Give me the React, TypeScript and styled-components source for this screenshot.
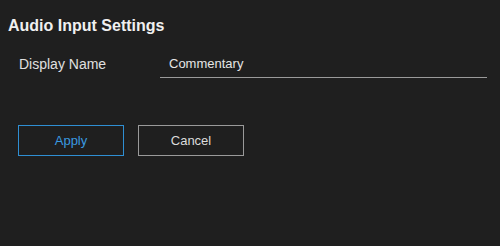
import React from 'react';
import styled, { createGlobalStyle } from 'styled-components';

const Global = createGlobalStyle`
  html, body {
    margin: 0;
    background: #1f1f1f;
  }
  body {
    font-family: "Liberation Sans", Arial, sans-serif;
    color: #e6e6e6;
  }
`;

const Panel = styled.div`
  width: 500px;
  height: 246px;
  background: #1f1f1f;
  box-sizing: border-box;
  padding: 17px 13px 0 8px;
`;

const Title = styled.h1`
  margin: 0;
  font-size: 16px;
  font-weight: bold;
  color: #f0f0f0;
  line-height: 18px;
`;

const Row = styled.div`
  display: flex;
  align-items: flex-end;
  margin-top: 17px;
  padding-left: 11px;
`;

const Label = styled.label`
  width: 141px;
  font-size: 14px;
  line-height: 18px;
  color: #e0e0e0;
  padding-bottom: 5px;
`;

const Input = styled.input`
  flex: 1;
  background: transparent;
  border: none;
  border-bottom: 1px solid #9a9a9a;
  color: #e6e6e6;
  font-family: inherit;
  font-size: 13px;
  height: 22px;
  padding: 0 0 3px 9px;
  outline: none;
`;

const Actions = styled.div`
  display: flex;
  gap: 14px;
  margin-top: 47px;
  padding-left: 10px;
`;

const Button = styled.button<{ $primary?: boolean }>`
  width: 106px;
  height: 31px;
  background: transparent;
  border: 1px solid ${(p) => (p.$primary ? '#2f8fd3' : '#9a9a9a')};
  color: ${(p) => (p.$primary ? '#3a9ae0' : '#dcdcdc')};
  font-family: inherit;
  font-size: 13px;
  cursor: pointer;
`;

export default function App() {
  return (
    <Panel>
      <Global />
      <Title>Audio Input Settings</Title>
      <Row>
        <Label>Display Name</Label>
        <Input defaultValue="Commentary" />
      </Row>
      <Actions>
        <Button $primary>Apply</Button>
        <Button>Cancel</Button>
      </Actions>
    </Panel>
  );
}
